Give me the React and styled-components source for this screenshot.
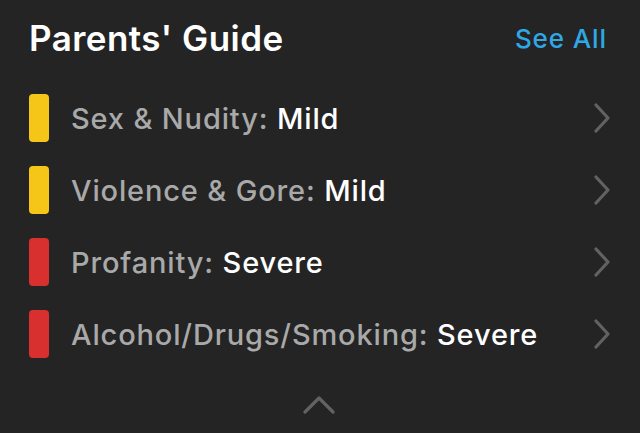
import styled, { createGlobalStyle } from "styled-components";

const GlobalStyle = createGlobalStyle`
  html, body {
    margin: 0;
    padding: 0;
    background: #242424;
  }
  body {
    font-family: Inter, "Noto Sans", sans-serif;
    -webkit-font-smoothing: antialiased;
  }
`;

const Panel = styled.section`
  width: 640px;
  height: 433px;
  background: #242424;
  box-sizing: border-box;
  padding: 18px 33px 0 29px;
  display: flex;
  flex-direction: column;
`;

const Header = styled.div`
  display: flex;
  align-items: center;
  justify-content: space-between;
  height: 40px;
  h2 {
    margin: 0;
    font-size: 35px;
    font-weight: 600;
    color: #ffffff;
    letter-spacing: 0.45px;
  }
  a {
    font-size: 26px;
    font-weight: 500;
    color: #2fa8e6;
    text-decoration: none;
    letter-spacing: 0.9px;
  }
`;

const List = styled.ul`
  list-style: none;
  margin: 36px 0 0;
  padding: 0;
  display: flex;
  flex-direction: column;
  gap: 24px;
`;

const Row = styled.li`
  display: flex;
  align-items: center;
  height: 48px;
`;

const Bar = styled.span`
  width: 20px;
  height: 48px;
  border-radius: 4px;
  background: ${(p) => (p.$level === "Severe" ? "#d8302f" : "#f5c518")};
  flex-shrink: 0;
`;

const Label = styled.div`
  flex: 1;
  margin-left: 22px;
  font-size: 29px;
  font-weight: 500;
  color: #a9a9a9;
  letter-spacing: 0.85px;
  b {
    color: #ffffff;
    font-weight: 550;
  }
`;

const Chevron = styled.svg`
  width: 16px;
  height: 30px;
  margin-right: -3px;
`;

const Footer = styled.div`
  display: flex;
  justify-content: center;
  margin-top: 38px;
  padding-left: 2px;
`;

const ratings = [
  { label: "Sex & Nudity", level: "Mild" },
  { label: "Violence & Gore", level: "Mild" },
  { label: "Profanity", level: "Severe" },
  { label: "Alcohol/Drugs/Smoking", level: "Severe" },
];

const App = () => {
  return (
    <>
      <GlobalStyle />
      <Panel>
        <Header>
          <h2>Parents' Guide</h2>
          <a href="#">See All</a>
        </Header>
        <List>
          {ratings.map((r) => (
            <Row key={r.label}>
              <Bar $level={r.level} />
              <Label>
                {r.label}: <b>{r.level}</b>
              </Label>
              <Chevron viewBox="0 0 16 30">
                <path
                  d="M2 2 L14 15 L2 28"
                  fill="none"
                  stroke="#626262"
                  strokeWidth="3.2"
                  strokeLinecap="round"
                  strokeLinejoin="round"
                />
              </Chevron>
            </Row>
          ))}
        </List>
        <Footer>
          <svg width="32" height="18" viewBox="0 0 32 18">
            <path
              d="M2 16 L16 2 L30 16"
              fill="none"
              stroke="#626262"
              strokeWidth="3.2"
              strokeLinecap="round"
              strokeLinejoin="round"
            />
          </svg>
        </Footer>
      </Panel>
    </>
  );
};

export default App;
